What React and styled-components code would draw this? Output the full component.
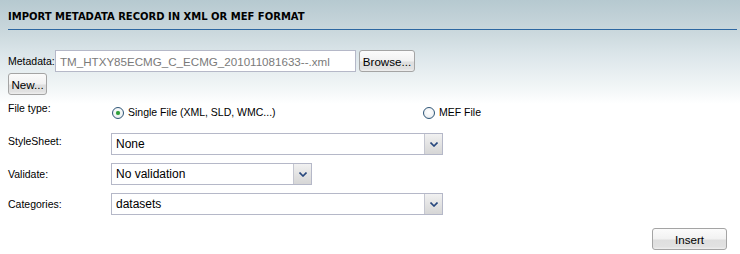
import React from 'react';
import styled, { createGlobalStyle } from 'styled-components';

const GlobalStyle = createGlobalStyle`
  html, body {
    margin: 0;
    padding: 0;
    background: #fff;
  }
  body {
    font-family: "Liberation Sans", Arial, sans-serif;
    font-size: 10.5px;
    color: #000;
  }
`;

const Panel = styled.div`
  width: 740px;
  height: 254px;
  box-sizing: border-box;
  background: linear-gradient(
    to bottom,
    #b6c9d0 0px,
    #c9d7dc 30px,
    #dce6ea 55px,
    #f2f6f7 88px,
    #ffffff 104px
  );
`;

const Header = styled.div`
  margin: 0 3px 0 8px;
  height: 30px;
  box-sizing: border-box;
  padding-top: 4px;
  border-bottom: 1px solid #2d67a1;
  display: flex;
  align-items: center;
`;

const Title = styled.h1`
  margin: 0;
  font-family: "DejaVu Sans", Verdana, sans-serif;
  font-size: 10px;
  font-weight: bold;
  color: #000;
  text-transform: uppercase;
`;

const Form = styled.form`
  padding: 20px 12px 0 8px;
  margin: 0;
`;

const MetadataRow = styled.div`
  width: 410px;
  display: flex;
  flex-wrap: wrap;
  align-items: center;
  row-gap: 1px;
`;

const InlineLabel = styled.label`
  width: 47px;
  white-space: nowrap;
`;

const TextInput = styled.div`
  width: 301px;
  height: 22px;
  box-sizing: border-box;
  border: 1px solid #b5b8c8;
  background: #fff;
  color: #7a7a7a;
  font-size: 11.6px;
  padding-left: 4px;
  display: flex;
  align-items: center;
  margin-right: 3px;
`;

const Button = styled.button`
  width: ${p => p.$w}px;
  height: 22px;
  box-sizing: border-box;
  padding: 0;
  border: 1px solid #a4a4a4;
  border-radius: 3px;
  font-family: "Liberation Sans", Arial, sans-serif;
  font-size: 11.6px;
  color: #000;
  background: linear-gradient(
    to bottom,
    #fbfbfb 0%,
    #f1f1f1 52%,
    #dedede 53%,
    #e1e1e1 88%,
    #efefef 100%
  );
  cursor: pointer;
`;

const FieldRow = styled.div`
  display: grid;
  grid-template-columns: 103px 1fr;
  align-items: ${p => (p.$top ? 'start' : 'center')};
  height: ${p => p.$h || 30}px;
`;

const FieldLabel = styled.label`
  padding-top: ${p => p.$pt || 0}px;
  padding-bottom: ${p => p.$pb || 0}px;
  line-height: 13px;
`;

const RadioGroup = styled.div`
  display: grid;
  grid-template-columns: 311px auto;
  padding-top: 11px;
  padding-left: 1px;
`;

const RadioOption = styled.label`
  display: flex;
  align-items: center;
  gap: 4px;
  line-height: 13px;
`;

const RadioDot = styled.span`
  width: 12px;
  height: 12px;
  box-sizing: border-box;
  border-radius: 50%;
  border: 1px solid #2f5677;
  background: radial-gradient(circle at 50% 40%, #ffffff 0%, #f2f4f6 55%, #d6dde3 100%);
  display: flex;
  align-items: center;
  justify-content: center;

  &::after {
    content: '';
    width: 4px;
    height: 4px;
    border-radius: 50%;
    background: ${p => (p.$checked ? '#2f9d3a' : 'transparent')};
    box-shadow: ${p => (p.$checked ? '0 0 1px #7fcf86' : 'none')};
  }
`;

const Select = styled.div`
  width: ${p => p.$w}px;
  height: 22px;
  box-sizing: border-box;
  border: 1px solid #b5b8c8;
  background: #fff;
  display: flex;
  align-items: stretch;
`;

const SelectValue = styled.span`
  flex: 1;
  display: flex;
  align-items: center;
  padding-left: 4px;
  font-size: 12px;
  color: #000;
`;

const SelectArrow = styled.span`
  width: 17px;
  border-left: 1px solid #c4c6d0;
  background: linear-gradient(to bottom, #f1f1f1 0%, #e3e3e3 50%, #d6d6d6 100%);
  display: flex;
  align-items: center;
  justify-content: center;
`;

const Footer = styled.div`
  display: flex;
  justify-content: flex-end;
  margin-top: 9px;
  padding-right: 1px;
`;

const Chevron = () => (
  <svg width="8" height="5" viewBox="0 0 8 5">
    <path d="M0.5 0.5 L4 4 L7.5 0.5" fill="none" stroke="#27477d" strokeWidth="1.6" />
  </svg>
);

const Dropdown = ({ width, value }) => (
  <Select $w={width}>
    <SelectValue>{value}</SelectValue>
    <SelectArrow>
      <Chevron />
    </SelectArrow>
  </Select>
);

export default function App() {
  return (
    <Panel>
      <GlobalStyle />
      <Header>
        <Title>Import metadata record in XML or MEF format</Title>
      </Header>
      <Form onSubmit={e => e.preventDefault()}>
        <MetadataRow>
          <InlineLabel>Metadata:</InlineLabel>
          <TextInput>TM_HTXY85ECMG_C_ECMG_201011081633--.xml</TextInput>
          <Button type="button" $w={56}>Browse...</Button>
          <Button type="button" $w={39}>New...</Button>
        </MetadataRow>

        <FieldRow $h={34} $top>
          <FieldLabel $pt={7}>File type:</FieldLabel>
          <RadioGroup>
            <RadioOption>
              <RadioDot $checked />
              Single File (XML, SLD, WMC...)
            </RadioOption>
            <RadioOption>
              <RadioDot />
              MEF File
            </RadioOption>
          </RadioGroup>
        </FieldRow>

        <FieldRow>
          <FieldLabel $pb={6}>StyleSheet:</FieldLabel>
          <Dropdown width={332} value="None" />
        </FieldRow>

        <FieldRow>
          <FieldLabel>Validate:</FieldLabel>
          <Dropdown width={201} value="No validation" />
        </FieldRow>

        <FieldRow>
          <FieldLabel>Categories:</FieldLabel>
          <Dropdown width={332} value="datasets" />
        </FieldRow>

        <Footer>
          <Button type="button" $w={75}>Insert</Button>
        </Footer>
      </Form>
    </Panel>
  );
}
